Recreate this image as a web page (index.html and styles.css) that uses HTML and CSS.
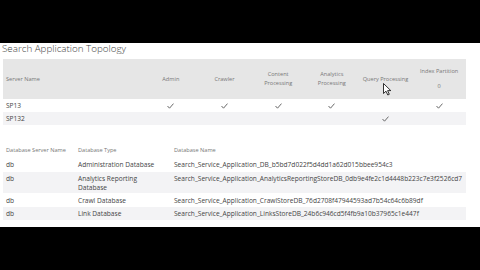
FILE: index.html
```html
<!DOCTYPE html>
<html>
<head>
<meta charset="utf-8">
<link rel="stylesheet" href="styles.css">
</head>
<body>
<div class="page">
  <h1 class="title">Search Application Topology</h1>
  <div class="topo">
    <div class="trow thead">
      <div class="cname">Server Name</div>
      <div class="c">Admin</div>
      <div class="c">Crawler</div>
      <div class="c">Content<br>Processing</div>
      <div class="c">Analytics<br>Processing</div>
      <div class="c">Query Processing</div>
      <div class="c stack"><span>Index Partition</span><span>0</span></div>
    </div>
    <div class="trow">
      <div class="cname">SP13</div>
      <div class="c"><svg class="chk" viewBox="0 0 7 6"><polyline points="0.5,3 2.5,5.2 6.5,0.6"/></svg></div>
      <div class="c"><svg class="chk" viewBox="0 0 7 6"><polyline points="0.5,3 2.5,5.2 6.5,0.6"/></svg></div>
      <div class="c"><svg class="chk" viewBox="0 0 7 6"><polyline points="0.5,3 2.5,5.2 6.5,0.6"/></svg></div>
      <div class="c"><svg class="chk" viewBox="0 0 7 6"><polyline points="0.5,3 2.5,5.2 6.5,0.6"/></svg></div>
      <div class="c"></div>
      <div class="c"><svg class="chk" viewBox="0 0 7 6"><polyline points="0.5,3 2.5,5.2 6.5,0.6"/></svg></div>
    </div>
    <div class="trow alt">
      <div class="cname">SP132</div>
      <div class="c"></div>
      <div class="c"></div>
      <div class="c"></div>
      <div class="c"></div>
      <div class="c"><svg class="chk" viewBox="0 0 7 6"><polyline points="0.5,3 2.5,5.2 6.5,0.6"/></svg></div>
      <div class="c"></div>
    </div>
  </div>

  <div class="dbs">
    <div class="drow dhead">
      <div>Database Server Name</div>
      <div>Database Type</div>
      <div>Database Name</div>
    </div>
    <div class="drow r1">
      <div>db</div>
      <div>Administration Database</div>
      <div>Search_Service_Application_DB_b5bd7d022f5d4dd1a62d015bbee954c3</div>
    </div>
    <div class="drow alt r2">
      <div>db</div>
      <div>Analytics Reporting<br>Database</div>
      <div>Search_Service_Application_AnalyticsReportingStoreDB_0db9e4fe2c1d4448b223c7e3f2526cd7</div>
    </div>
    <div class="drow r3">
      <div>db</div>
      <div>Crawl Database</div>
      <div>Search_Service_Application_CrawlStoreDB_76d2708f47944593ad7b54c64c6b89df</div>
    </div>
    <div class="drow alt r4">
      <div>db</div>
      <div>Link Database</div>
      <div>Search_Service_Application_LinksStoreDB_24b6c946cd5f4fb9a10b37965c1e447f</div>
    </div>
  </div>

  <svg class="cursor" viewBox="0 0 9 13"><path d="M0.5,0.5 L0.5,10.5 L3,8.2 L4.8,12 L6.3,11.3 L4.6,7.6 L7.8,7.6 Z"/></svg>
</div>
</body>
</html>
```

FILE: styles.css
```css
html, body {
  margin: 0;
  padding: 0;
  background: #000;
}
.page {
  position: relative;
  margin-top: 43px;
  height: 184px;
  background: #fff;
  padding-left: 2px;
  box-sizing: border-box;
  font-family: "Open Sans", "Liberation Sans", sans-serif;
  color: #444;
}
.title {
  margin: 0;
  height: 16px;
  font-size: 9.8px;
  line-height: 11px;
  font-weight: 300;
  color: #444;
  letter-spacing: 0;
}
.topo {
  width: 463px;
  margin-left: 1px;
}
.trow {
  display: grid;
  grid-template-columns: 141px repeat(6, 1fr);
  height: 13px;
  align-items: center;
  font-size: 6.6px;
  color: #444;
}
.thead {
  height: 40px;
  background: #e6e6e6;
  color: #777;
  font-size: 5.6px;
  line-height: 9px;
}
.alt {
  background: #f3f3f5;
}
.cname {
  padding-left: 3px;
}
.c {
  text-align: center;
  display: flex;
  justify-content: center;
  align-items: center;
}
.stack {
  flex-direction: column;
  gap: 6px;
  margin-top: -1px;
}
.chk {
  width: 7px;
  height: 6px;
  display: block;
}
.chk polyline {
  fill: none;
  stroke: #6a6a6a;
  stroke-width: 1;
}
.dbs {
  width: 463px;
  margin-left: 1px;
  margin-top: 19px;
  font-size: 6.6px;
  color: #444;
}
.drow {
  display: grid;
  grid-template-columns: 72px 96px 1fr;
  align-items: center;
  line-height: 9px;
  white-space: nowrap;
}
.drow > div {
  padding-left: 3px;
  color: #444;
}
.dhead {
  height: 13px;
  font-size: 5.6px;
}
.dhead > div {
  color: #777;
}
.r1 { height: 15px; }
.r2 { height: 21px; align-items: start; padding-top: 2px; box-sizing: border-box; }
.r3 { height: 14px; }
.r4 { height: 13px; }
.cursor {
  position: absolute;
  left: 383px;
  top: 40px;
  width: 9px;
  height: 13px;
}
.cursor path {
  fill: #fff;
  stroke: #000;
  stroke-width: 0.8;
  stroke-linejoin: round;
}
```
